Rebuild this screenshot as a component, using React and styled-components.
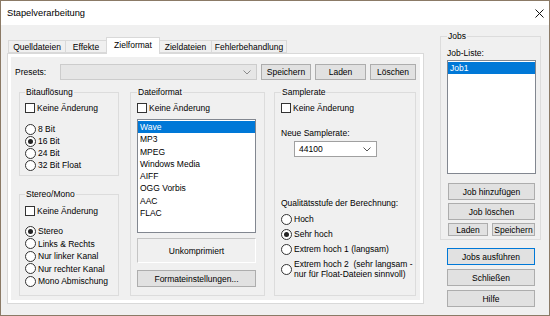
import React from 'react'
import styled, { createGlobalStyle } from 'styled-components'

const GlobalStyle = createGlobalStyle`
  html, body {
    margin: 0;
    padding: 0;
    background: #f0f0f0;
  }
`

const Window = styled.div`
  width: 550px;
  height: 316px;
  box-sizing: border-box;
  border: 1px solid #8b7a66;
  background: #f0f0f0;
  display: flex;
  flex-direction: column;
  font-family: "Liberation Sans", Arial, sans-serif;
  font-size: 8.5px;
  color: #000;
  overflow: hidden;
`

const TitleBar = styled.div`
  height: 24px;
  flex: none;
  background: #fff;
  display: flex;
  align-items: center;
  justify-content: space-between;
  padding: 0 5px 0 6px;
`

const Title = styled.span`
  font-size: 9.3px;
`

const Body = styled.div`
  display: flex;
  gap: 16px;
  padding: 6px 0 0 6px;
`

const LeftColumn = styled.div`
  width: 417px;
  margin-top: 6px;
  display: flex;
  flex-direction: column;
`

const TabStrip = styled.div`
  height: 16px;
  display: flex;
  align-items: flex-end;
  padding-left: 2px;
`

const Tab = styled.div`
  box-sizing: border-box;
  width: ${p => p.$w}px;
  height: ${p => (p.$active ? 17 : 13)}px;
  margin-bottom: ${p => (p.$active ? -1 : 0)}px;
  border: 1px solid #d9d9d9;
  border-bottom: ${p => (p.$active ? 'none' : '1px solid #d9d9d9')};
  margin-left: -1px;
  background: ${p => (p.$active ? '#fff' : '#f0f0f0')};
  position: relative;
  z-index: ${p => (p.$active ? 1 : 0)};
  display: flex;
  align-items: center;
  justify-content: center;
  padding-bottom: ${p => (p.$active ? 3 : 0)}px;
`

const Panel = styled.div`
  box-sizing: border-box;
  height: 251px;
  border: 1px solid #d9d9d9;
  background: #fff;
  padding: 3px;
`

const Page = styled.div`
  height: 100%;
  background: #f0f0f0;
  padding: 7px 4px 0 4px;
  box-sizing: border-box;
`

const PresetRow = styled.div`
  display: flex;
  align-items: center;
  gap: 4px;
  height: 16px;
`

const PresetLabel = styled.span`
  width: 41px;
`

const Combo = styled.div`
  box-sizing: border-box;
  width: ${p => p.$w}px;
  height: 16px;
  border: 1px solid ${p => (p.$disabled ? '#cccccc' : '#a0a0a0')};
  background: ${p => (p.$disabled ? '#e6e6e6' : '#fff')};
  display: flex;
  align-items: center;
  justify-content: space-between;
  padding: 0 5px 0 4px;
  margin-left: ${p => p.$ml || 0}px;
  margin-top: ${p => p.$mt || 0}px;
`

const Button = styled.div`
  box-sizing: border-box;
  width: ${p => p.$w}px;
  height: ${p => p.$h || 17}px;
  margin-left: ${p => p.$ml || 0}px;
  margin-top: ${p => p.$mt || 0}px;
  background: #e1e1e1;
  border: 1px solid ${p => (p.$default ? '#0078d7' : '#adadad')};
  display: flex;
  align-items: center;
  justify-content: center;
  white-space: nowrap;
  flex: none;
`

const GroupsRow = styled.div`
  display: flex;
  height: 209px;
  margin: 7px 0 0 4px;
`

const Stack = styled.div`
  display: flex;
  flex-direction: column;
  width: ${p => p.$w}px;
  margin-left: ${p => p.$ml || 0}px;
  gap: ${p => p.$gap || 0}px;
`

const Group = styled.fieldset`
  box-sizing: border-box;
  margin: 0 0 0 ${p => p.$ml || 0}px;
  padding: 0 ${p => p.$pr || 0}px 0 ${p => p.$pl || 5}px;
  width: ${p => p.$w}px;
  height: ${p => p.$h}px;
  min-width: 0;
  border: 1px solid #dcdcdc;
  display: flex;
  flex-direction: column;
  align-items: flex-start;
`

const Legend = styled.legend`
  padding: 0 1px;
  font-size: 8.5px;
  line-height: 10px;
`

const CheckRow = styled.div`
  display: flex;
  align-items: center;
  gap: 2px;
  height: 12px;
  margin-top: ${p => p.$mt || 0}px;
`

const CheckBox = styled.span`
  width: 10px;
  height: 10px;
  box-sizing: border-box;
  border: 1px solid #333;
  background: #fff;
`

const RadioList = styled.div`
  display: flex;
  flex-direction: column;
  gap: ${p => p.$gap || 0}px;
  margin-top: ${p => p.$mt || 0}px;
`

const RadioRow = styled.div`
  display: flex;
  align-items: center;
  gap: 2px;
  height: ${p => p.$h || 12}px;
  line-height: 10px;
`

const RadioCircle = styled.span`
  width: 11px;
  height: 11px;
  flex: none;
  box-sizing: border-box;
  border: 1px solid #333;
  border-radius: 50%;
  background: #fff;
  display: flex;
  align-items: center;
  justify-content: center;
  &::after {
    content: '';
    width: 5px;
    height: 5px;
    border-radius: 50%;
    background: ${p => (p.$checked ? '#222' : 'transparent')};
  }
`

const ListBox = styled.div`
  box-sizing: border-box;
  width: ${p => p.$w}px;
  height: 114px;
  margin-top: ${p => p.$mt || 0}px;
  border: 1px solid #828790;
  background: #fff;
  padding: 1px 0 0 0;
`

const ListItem = styled.div`
  height: 12.3px;
  line-height: 12.3px;
  padding-left: 2px;
  background: ${p => (p.$selected ? '#0078d7' : 'transparent')};
  color: ${p => (p.$selected ? '#fff' : '#000')};
`

const InfoBox = styled.div`
  box-sizing: border-box;
  width: 119px;
  height: 25px;
  margin-top: 5px;
  border: 1px solid #fff;
  border-top-color: #c4c4c4;
  border-left-color: #c4c4c4;
  display: flex;
  align-items: center;
  justify-content: center;
`

const Text = styled.div`
  height: 12px;
  line-height: 12px;
  margin-top: ${p => p.$mt || 0}px;
`

const RightColumn = styled.div`
  width: 101px;
  display: flex;
  flex-direction: column;
`

const ButtonPair = styled.div`
  display: flex;
  gap: 4px;
  margin: 3px 0 0 1px;
`

const Chevron = ({ color }) => (
  <svg width="8" height="5" viewBox="0 0 8 5">
    <polyline points="0.5,0.5 4,4 7.5,0.5" fill="none" stroke={color} strokeWidth="1" />
  </svg>
)

const CloseIcon = () => (
  <svg width="9" height="9" viewBox="0 0 9 9">
    <path d="M0.5 0.5 L8.5 8.5 M8.5 0.5 L0.5 8.5" stroke="#111" strokeWidth="1" />
  </svg>
)

const Radio = ({ checked, children, h }) => (
  <RadioRow $h={h}>
    <RadioCircle $checked={checked} />
    <span>{children}</span>
  </RadioRow>
)

const Check = ({ mt }) => (
  <CheckRow $mt={mt}>
    <CheckBox />
    <span>Keine Änderung</span>
  </CheckRow>
)

const tabs = [
  ['Quelldateien', 58],
  ['Effekte', 42],
  ['Zielformat', 54],
  ['Zieldateien', 53],
  ['Fehlerbehandlung', 76],
]

const formats = ['Wave', 'MP3', 'MPEG', 'Windows Media', 'AIFF', 'OGG Vorbis', 'AAC', 'FLAC']

export default function App() {
  return (
    <>
      <GlobalStyle />
      <Window>
        <TitleBar>
          <Title>Stapelverarbeitung</Title>
          <CloseIcon />
        </TitleBar>
        <Body>
          <LeftColumn>
            <TabStrip>
              {tabs.map(([name, w]) => (
                <Tab key={name} $w={w} $active={name === 'Zielformat'}>{name}</Tab>
              ))}
            </TabStrip>
            <Panel>
              <Page>
                <PresetRow>
                  <PresetLabel>Presets:</PresetLabel>
                  <Combo $w={197} $disabled>
                    <span />
                    <Chevron color="#8a8a8a" />
                  </Combo>
                  <Button $w={50} $h={16}>Speichern</Button>
                  <Button $w={51} $h={16}>Laden</Button>
                  <Button $w={46} $h={16}>Löschen</Button>
                </PresetRow>

                <GroupsRow>
                  <Stack $w={100} $gap={13}>
                    <Group $w={100} $h={89}>
                      <Legend>Bitauflösung</Legend>
                      <Check mt={5} />
                      <RadioList $mt={9}>
                        <Radio>8 Bit</Radio>
                        <Radio checked>16 Bit</Radio>
                        <Radio>24 Bit</Radio>
                        <Radio>32 Bit Float</Radio>
                      </RadioList>
                    </Group>
                    <Group $w={100} $h={107}>
                      <Legend>Stereo/Mono</Legend>
                      <Check mt={6} />
                      <RadioList $mt={8}>
                        <Radio h={12.5} checked>Stereo</Radio>
                        <Radio h={12.5}>Links &amp; Rechts</Radio>
                        <Radio h={12.5}>Nur linker Kanal</Radio>
                        <Radio h={12.5}>Nur rechter Kanal</Radio>
                        <Radio h={12.5}>Mono Abmischung</Radio>
                      </RadioList>
                    </Group>
                  </Stack>

                  <Group $w={135} $h={209} $ml={11} $pl={6}>
                    <Legend>Dateiformat</Legend>
                    <Check mt={5} />
                    <ListBox $w={119} $mt={5}>
                      {formats.map((f, i) => (
                        <ListItem key={f} $selected={i === 0}>{f}</ListItem>
                      ))}
                    </ListBox>
                    <InfoBox>Unkomprimiert</InfoBox>
                    <Button $w={119} $mt={7}>Formateinstellungen...</Button>
                  </Group>

                  <Group $w={142} $h={209} $ml={9} $pl={6}>
                    <Legend>Samplerate</Legend>
                    <Check mt={5} />
                    <Text $mt={13}>Neue Samplerate:</Text>
                    <Combo $w={83} $ml={13} $mt={2}>
                      <span>44100</span>
                      <Chevron color="#555" />
                    </Combo>
                    <Text $mt={40}>Qualitätsstufe der Berechnung:</Text>
                    <RadioList $mt={4} $gap={3}>
                      <Radio>Hoch</Radio>
                      <Radio checked>Sehr hoch</Radio>
                      <Radio>Extrem hoch 1 (langsam)</Radio>
                      <Radio h={22}>
                        Extrem hoch 2&nbsp; (sehr langsam -<br />nur für Float-Dateien sinnvoll)
                      </Radio>
                    </RadioList>
                  </Group>
                </GroupsRow>
              </Page>
            </Panel>
          </LeftColumn>

          <RightColumn>
            <Group $w={101} $h={209} $pl={6} $pr={4}>
              <Legend>Jobs</Legend>
              <Text $mt={6}>Job-Liste:</Text>
              <ListBox $w={89} $mt={1}>
                <ListItem $selected>Job1</ListItem>
              </ListBox>
              <Button $w={87} $ml={1} $mt={9}>Job hinzufügen</Button>
              <Button $w={87} $ml={1} $mt={3}>Job löschen</Button>
              <ButtonPair>
                <Button $w={40} $h={13}>Laden</Button>
                <Button $w={43} $h={13}>Speichern</Button>
              </ButtonPair>
            </Group>
            <Button $w={88} $ml={7} $mt={8} $default>Jobs ausführen</Button>
            <Button $w={88} $ml={7} $mt={4}>Schließen</Button>
            <Button $w={88} $ml={7} $mt={4}>Hilfe</Button>
          </RightColumn>
        </Body>
      </Window>
    </>
  )
}
